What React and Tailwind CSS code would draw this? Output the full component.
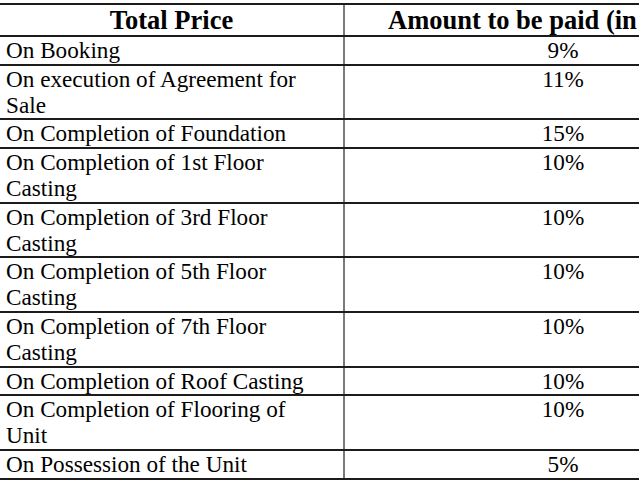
import React from "react";

const rows = [
  { label: ["On Booking"], value: "9%" },
  { label: ["On execution of Agreement for", "Sale"], value: "11%" },
  { label: ["On Completion of Foundation"], value: "15%" },
  { label: ["On Completion of 1st Floor", "Casting"], value: "10%" },
  { label: ["On Completion of 3rd Floor", "Casting"], value: "10%" },
  { label: ["On Completion of 5th Floor", "Casting"], value: "10%" },
  { label: ["On Completion of 7th Floor", "Casting"], value: "10%" },
  { label: ["On Completion of Roof Casting"], value: "10%" },
  { label: ["On Completion of Flooring of", "Unit"], value: "10%" },
  { label: ["On Possession of the Unit"], value: "5%" },
];

export default function App() {
  return (
    <div
      className="w-[639px] h-[480px] overflow-hidden bg-white pt-[3px] text-black"
      style={{ fontFamily: '"Liberation Serif", "Times New Roman", serif' }}
    >
      <div className="w-[781px] border-t-2 border-[#1c1c1c]">
        <div className="flex border-b-2 border-[#1c1c1c]">
          <div className="w-[345px] shrink-0 border-r-2 border-[#7a7a7a] text-center font-bold text-[26.5px] leading-[30px]">
            Total Price
          </div>
          <div className="flex-1 pl-[43px] font-bold text-[26.5px] leading-[30px] whitespace-nowrap">
            Amount to be paid (in %)
          </div>
        </div>
        {rows.map((r, i) => (
          <div key={i} className="flex border-b-2 border-[#1c1c1c] text-[23.2px] leading-[25.8px]">
            <div className="w-[345px] shrink-0 border-r-2 border-[#7a7a7a] pl-[6px] pt-[1px]">
              {r.label.map((l, j) => (
                <div key={j} className="whitespace-nowrap">{l}</div>
              ))}
            </div>
            <div className="flex-1 text-center pt-[1px]">{r.value}</div>
          </div>
        ))}
      </div>
    </div>
  );
}
